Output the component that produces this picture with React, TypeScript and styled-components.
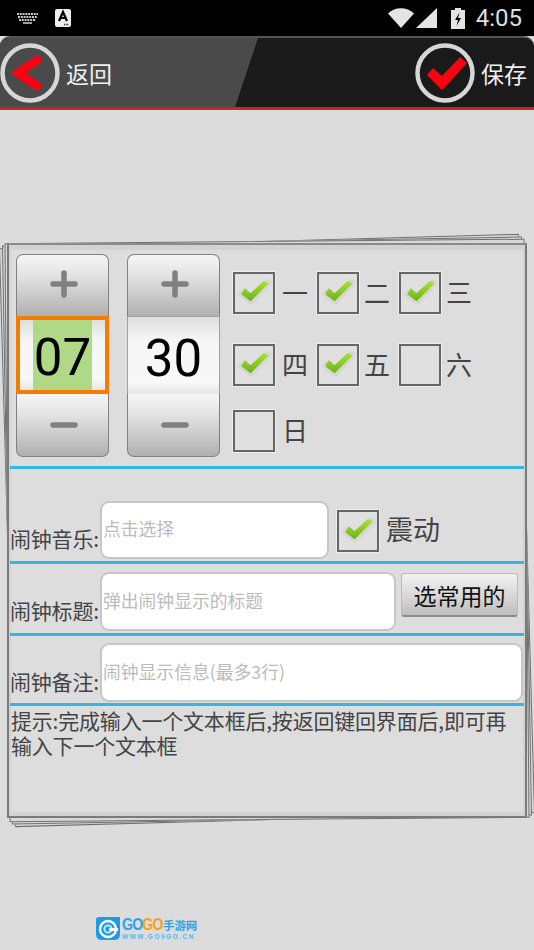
import React from "react";
import styled, { createGlobalStyle } from "styled-components";

const CJK = `"Noto Sans CJK SC", "Noto Sans", sans-serif`;

const Global = createGlobalStyle`
  html, body { margin: 0; padding: 0; background: #dcdcdc; }
  body { font-family: ${CJK}; overflow: hidden; }
  * { box-sizing: border-box; }
`;

const Screen = styled.div`
  width: 534px;
  height: 950px;
  display: flex;
  flex-direction: column;
  background: #dcdcdc;
`;

const StatusBar = styled.div`
  height: 36px;
  background: #000;
  display: flex;
  align-items: center;
  padding: 0 12px 0 17px;
`;
const StatusLeft = styled.div`
  display: flex;
  align-items: center;
  gap: 17px;
  flex: 1;
`;
const StatusRight = styled.div`
  display: flex;
  align-items: center;
`;
const Clock = styled.span`
  font-family: Roboto, sans-serif;
  font-size: 24px;
  line-height: 36px;
  color: #dedede;
  margin-left: 11px;
`;

const Header = styled.div`
  position: relative;
  height: 74px;
  background: #1a1a1a;
  border-top: 2px solid #555;
  border-bottom: 3px solid #c4262a;
  border-radius: 10px 10px 0 0;
  display: flex;
  align-items: center;
  justify-content: space-between;
  overflow: hidden;
`;
const HeaderShade = styled.div`
  position: absolute;
  left: 0;
  top: 0;
  bottom: 0;
  width: 258px;
  background: #4a4a4a;
  clip-path: polygon(0 0, 100% 0, 235px 100%, 0 100%);
`;
const HeaderAction = styled.div`
  position: relative;
  display: flex;
  align-items: center;
  gap: 6px;
  padding-right: 7px;
`;
const HeaderText = styled.span`
  font-size: 23px;
  line-height: 30px;
  color: #f0f0f0;
`;

const Main = styled.div`
  flex: 1;
  padding: 133px 7px 0;
  display: flex;
  flex-direction: column;
`;
const Stack = styled.div`
  position: relative;
  height: 575px;
`;
const Sheet = styled.div<{ $deg: number }>`
  position: absolute;
  inset: -2px 0;
  border: 1px solid #707070;
  background: #d8d8d8;
  transform: rotate(${(p) => p.$deg}deg);
`;
const Panel = styled.div`
  position: relative;
  height: 100%;
  background: #dddddd;
  border: 2px solid #7a7a7a;
  border-top-color: #8a8a8a;
  box-shadow: inset 2px 5px 0 #d2d2d2, inset -2px -4px 0 #d2d2d2;
  padding: 9px 1px 0;
  display: flex;
  flex-direction: column;
`;

const TopArea = styled.div`
  display: flex;
  height: 212px;
  padding-left: 6px;
`;
const Stepper = styled.div`
  width: 93px;
  height: 203px;
  margin-right: 18px;
  display: flex;
  flex-direction: column;
`;
const StepButton = styled.div<{ $top?: boolean }>`
  height: ${(p) => (p.$top ? 62 : 63)}px;
  display: flex;
  align-items: center;
  justify-content: center;
  padding: ${(p) => (p.$top ? "0 0 3px 2px" : "0 0 0 2px")};
  background: linear-gradient(#f6f6f6, #e2e2e2 35%, #b0b0b0);
  border: 1px solid #808080;
  border-width: ${(p) => (p.$top ? "1px 1px 0" : "0 1px 1px")};
  border-radius: ${(p) => (p.$top ? "7px 7px 0 0" : "0 0 7px 7px")};
`;
const ValueBox = styled.div<{ $focus?: boolean }>`
  height: 78px;
  display: flex;
  align-items: center;
  justify-content: center;
  background: linear-gradient(#dedede, #f6f6f6 30%, #f8f8f8 85%, #e6e6e6);
  border: ${(p) => (p.$focus ? "4px solid #f57c00" : "1px solid #a0a0a0")};
  border-width: ${(p) => (p.$focus ? "4px" : "1px 1px 0")};
`;
const ValueText = styled.span<{ $focus?: boolean }>`
  font-family: Roboto, sans-serif;
  font-size: 51px;
  height: 70px;
  line-height: 76px;
  color: #000;
  padding: 0 1px;
  background: ${(p) => (p.$focus ? "#b0d987" : "transparent")};
`;

const Days = styled.div`
  display: grid;
  grid-template-columns: 84px 82px 82px;
  grid-template-rows: 72px 66px 42px;
  padding: 18px 0 0 4px;
  margin-left: -9px;
`;
const Day = styled.div<{ $gap: number }>`
  display: flex;
  align-items: center;
  align-self: start;
  gap: ${(p) => p.$gap}px;
`;
const DayText = styled.span`
  font-size: 26px;
  line-height: 42px;
  margin-top: -3px;
  color: #444;
`;
const Box = styled.div`
  width: 42px;
  height: 42px;
  flex: none;
  background: #e0e0e0;
  border: 2px solid #666;
  box-shadow: 0 0 0 1px #eee;
  display: flex;
  align-items: center;
  justify-content: center;
`;

const Rule = styled.div`
  height: 3px;
  flex: none;
  background: #33b5e5;
`;
const Row = styled.div<{ $height: number; $top: number; $bottom: number }>`
  height: ${(p) => p.$height}px;
  flex: none;
  padding: ${(p) => p.$top}px 0 ${(p) => p.$bottom}px;
  display: flex;
  align-items: flex-end;
`;
const Label = styled.span`
  flex: none;
  width: 90px;
  font-size: 21px;
  line-height: 25px;
  letter-spacing: -0.2px;
  color: #444;
  white-space: nowrap;
  padding-bottom: 8px;
`;
const Field = styled.input<{ $width: number }>`
  width: ${(p) => p.$width}px;
  height: 100%;
  flex: none;
  background: #fff;
  border: 2px solid #c6c6c6;
  border-radius: 9px;
  padding: 0 0 4px 1px;
  font-family: ${CJK};
  font-size: 17.8px;
  outline: none;
  &::placeholder {
    color: #bbb;
    opacity: 1;
  }
`;
const Vibrate = styled.div`
  display: flex;
  align-items: center;
  gap: 7px;
  margin: 0 0 7px 8px;
`;
const VibrateText = styled.span`
  font-size: 27px;
  line-height: 40px;
  margin-top: -4px;
  color: #444;
`;
const PickButton = styled.button`
  width: 117px;
  height: 44px;
  margin: 0 0 14px 5px;
  padding: 0;
  flex: none;
  font-family: ${CJK};
  font-size: 23px;
  line-height: 30px;
  color: #111;
  background: linear-gradient(#f2f2f2, #d4d4d4 60%, #bdbdbd);
  border: 1px solid #bbb;
  border-bottom: 2px solid #8c8c8c;
  border-radius: 3px;
`;
const Tip = styled.p`
  margin: 0;
  padding: 2px 0 0 1px;
  font-size: 21px;
  line-height: 25px;
  letter-spacing: -0.2px;
  color: #444;
`;

const Footer = styled.div`
  position: relative;
  display: flex;
  align-items: flex-start;
  gap: 2px;
  margin: 99px 0 0 89px;
`;
const Brand = styled.div`
  display: flex;
  flex-direction: column;
  flex: none;
`;
const BrandTop = styled.div`
  display: flex;
  height: 16px;
  align-items: center;
  white-space: nowrap;
`;
const BrandLatin = styled.span`
  display: inline-block;
  width: 41px;
  font-family: "Liberation Sans", sans-serif;
  font-weight: 700;
  font-size: 17px;
  line-height: 16px;
  letter-spacing: -1px;
  transform: scaleX(0.83);
  transform-origin: left center;
  white-space: nowrap;
`;
const BrandPart = styled.span<{ $color: string }>`
  color: ${(p) => p.$color};
`;
const BrandCjk = styled.span`
  font-size: 11.4px;
  font-weight: 700;
  line-height: 16px;
  color: #2aa4ea;
`;
const BrandUrl = styled.span`
  font-family: "Liberation Sans", sans-serif;
  font-size: 6.5px;
  line-height: 7px;
  font-weight: 700;
  letter-spacing: 1.5px;
  color: #58b5e8;
  white-space: nowrap;
`;

const Check = () => (
  <svg width="38" height="38" viewBox="0 0 38 38" style={{ display: "block" }}>
    <defs>
      <linearGradient id="chk" x1="0" y1="0" x2="0" y2="1">
        <stop offset="0" stopColor="#a9e03a" />
        <stop offset="1" stopColor="#6fb515" />
      </linearGradient>
    </defs>
    <path d="M7 20 L16 27 L33 9" fill="none" stroke="#c4c4c4" strokeWidth="7" strokeLinejoin="round" strokeLinecap="round" opacity=".35" />
    <path d="M7.5 20 L15.5 26 L32 9.5 L29 8 L15.5 20.5 L10 15.5 Z" fill="url(#chk)" stroke="url(#chk)" strokeWidth="2" strokeLinejoin="round" />
  </svg>
);

const Plus = () => (
  <svg width="28" height="28" viewBox="0 0 28 28" style={{ display: "block" }}>
    <path d="M3 14 H25 M14 3 V25" stroke="#808080" strokeWidth="5.5" strokeLinecap="round" />
  </svg>
);
const Minus = () => (
  <svg width="28" height="6" viewBox="0 0 28 6" style={{ display: "block" }}>
    <path d="M3 3 H25" stroke="#808080" strokeWidth="5.5" strokeLinecap="round" />
  </svg>
);

const KeyboardIcon = () => (
  <svg width="21" height="12" viewBox="0 0 21 12" style={{ display: "block" }}>
    <g stroke="#c8c8c8" strokeWidth="2.2" strokeDasharray="2 .8" fill="none">
      <path d="M0 2 H21" />
      <path d="M1 5 H20" />
      <path d="M2 8 H19" />
    </g>
    <path d="M6 11 H15" stroke="#c8c8c8" strokeWidth="1.6" />
  </svg>
);
const NoticeIcon = () => (
  <svg width="16" height="18" viewBox="0 0 16 18" style={{ display: "block" }}>
    <rect width="16" height="18" rx="2" fill="#eee" />
    <path d="M4 12 L8 3 L12 12 M5.5 9 H10.5" fill="none" stroke="#000" strokeWidth="2.2" />
    <path d="M9 15.5 H14" stroke="#333" strokeWidth="1.4" strokeDasharray="1 .6" />
  </svg>
);
const WifiIcon = () => (
  <svg width="26" height="20" viewBox="0 0 26 20" style={{ display: "block" }}>
    <path d="M0 5.5 C7 -1.5 19 -1.5 26 5.5 L13 20 Z" fill="#e4e4e4" />
  </svg>
);
const SignalIcon = () => (
  <svg width="22" height="20" viewBox="0 0 22 20" style={{ display: "block", marginLeft: 2 }}>
    <path d="M21 0 V20 H0 Z" fill="#e4e4e4" />
  </svg>
);
const BatteryIcon = () => (
  <svg width="14" height="21" viewBox="0 0 14 21" style={{ display: "block", marginLeft: 13 }}>
    <path d="M4 0 H10 V2 H14 V21 H0 V2 H4 Z" fill="#e4e4e4" />
    <path d="M8.5 4.5 L4 12 H7 L5.5 18 L10 10 H7 Z" fill="#000" />
  </svg>
);

const BackIcon = () => (
  <svg width="60" height="60" viewBox="0 0 60 60" style={{ display: "block" }}>
    <circle cx="30" cy="30" r="27.5" fill="none" stroke="#d6d6d6" strokeWidth="4.5" />
    <path d="M37 17 L18 30 L37 43" fill="none" stroke="#ff0010" strokeWidth="8.5" strokeLinecap="round" strokeLinejoin="miter" />
  </svg>
);
const SaveIcon = () => (
  <svg width="60" height="60" viewBox="0 0 60 60" style={{ display: "block" }}>
    <circle cx="30" cy="30" r="27.5" fill="none" stroke="#d6d6d6" strokeWidth="4.5" />
    <path d="M12 32 L18 25 L27 33 L45 14 L52 20 L27 47 Z" fill="#ff0010" />
  </svg>
);

const LogoIcon = () => (
  <svg width="24" height="23" viewBox="0 0 24 23" style={{ display: "block" }}>
    <path d="M3 0 H24 V17 Q24 23 18 23 H6 Q0 23 0 17 V3 Q0 0 3 0 Z" fill="#1c9be6" />
    <circle cx="12" cy="12" r="8" fill="none" stroke="#fff" strokeWidth="2.4" />
    <circle cx="12" cy="12" r="3.6" fill="none" stroke="#bfe6fb" strokeWidth="2" />
    <path d="M13 11 H22 V14 H13 Z" fill="#fff" />
  </svg>
);

const DayItem = ({ label, on, gap }: { label: string; on?: boolean; gap: number }) => (
  <Day $gap={gap}>
    <Box>{on && <Check />}</Box>
    <DayText>{label}</DayText>
  </Day>
);

export default function App() {
  return (
    <Screen>
      <Global />
      <StatusBar>
        <StatusLeft>
          <KeyboardIcon />
          <NoticeIcon />
        </StatusLeft>
        <StatusRight>
          <WifiIcon />
          <SignalIcon />
          <BatteryIcon />
          <Clock>4:05</Clock>
        </StatusRight>
      </StatusBar>
      <Header>
        <HeaderShade />
        <HeaderAction>
          <BackIcon />
          <HeaderText>返回</HeaderText>
        </HeaderAction>
        <HeaderAction>
          <SaveIcon />
          <HeaderText>保存</HeaderText>
        </HeaderAction>
      </Header>
      <Main>
        <Stack>
          <Sheet $deg={-1.6} />
          <Sheet $deg={-1} />
          <Sheet $deg={-0.5} />
          <Panel>
            <TopArea>
              <Stepper>
                <StepButton $top><Plus /></StepButton>
                <ValueBox $focus><ValueText $focus>07</ValueText></ValueBox>
                <StepButton><Minus /></StepButton>
              </Stepper>
              <Stepper>
                <StepButton $top><Plus /></StepButton>
                <ValueBox><ValueText>30</ValueText></ValueBox>
                <StepButton><Minus /></StepButton>
              </Stepper>
              <Days>
                <DayItem label="一" gap={7} on />
                <DayItem label="二" gap={5} on />
                <DayItem label="三" gap={5} on />
                <DayItem label="四" gap={7} on />
                <DayItem label="五" gap={5} on />
                <DayItem label="六" gap={5} />
                <DayItem label="日" gap={7} />
              </Days>
            </TopArea>
            <Rule />
            <Row $height={92} $top={32} $bottom={2}>
              <Label>闹钟音乐:</Label>
              <Field $width={229} placeholder="点击选择" readOnly />
              <Vibrate>
                <Box><Check /></Box>
                <VibrateText>震动</VibrateText>
              </Vibrate>
            </Row>
            <Rule />
            <Row $height={69} $top={8} $bottom={2}>
              <Label>闹钟标题:</Label>
              <Field $width={296} placeholder="弹出闹钟显示的标题" readOnly />
              <PickButton>选常用的</PickButton>
            </Row>
            <Rule />
            <Row $height={67} $top={7} $bottom={1}>
              <Label>闹钟备注:</Label>
              <Field $width={423} placeholder="闹钟显示信息(最多3行)" readOnly />
            </Row>
            <Rule />
            <Tip>提示:完成输入一个文本框后,按返回键回界面后,即可再输入下一个文本框</Tip>
          </Panel>
        </Stack>
        <Footer>
          <LogoIcon />
          <Brand>
            <BrandTop>
              <BrandLatin>
                <BrandPart $color="#2aa4ea">GO</BrandPart>
                <BrandPart $color="#f7a11a">GO</BrandPart>
              </BrandLatin>
              <BrandCjk>手游网</BrandCjk>
            </BrandTop>
            <BrandUrl>WWW.GO9GO.CN</BrandUrl>
          </Brand>
        </Footer>
      </Main>
    </Screen>
  );
}
